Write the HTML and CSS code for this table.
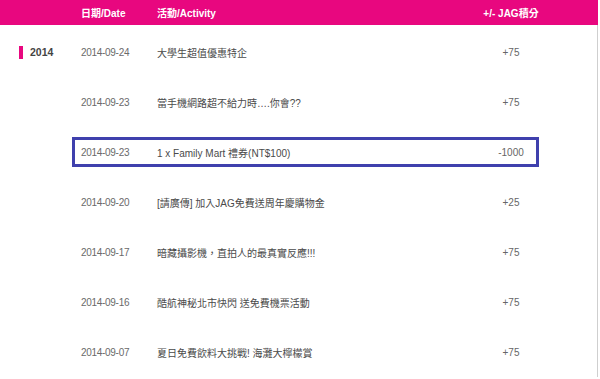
FILE: index.html
```html
<!DOCTYPE html>
<html lang="zh-Hant">
<head>
<meta charset="utf-8">
<title>JAG積分</title>
<link rel="stylesheet" href="styles.css">
</head>
<body>
<div class="page">
  <div class="header">
    <div class="year-cell"></div>
    <div class="cells">
      <div class="date">日期/Date</div>
      <div class="activity">活動/Activity</div>
      <div class="score">+/- JAG積分</div>
    </div>
  </div>
  <div class="list">
    <div class="row">
      <div class="year-cell"><span class="year-bar"></span><span class="year">2014</span></div>
      <div class="cells">
        <div class="date">2014-09-24</div>
        <div class="activity">大學生超值優惠特企</div>
        <div class="score">+75</div>
      </div>
    </div>
    <div class="row">
      <div class="year-cell"></div>
      <div class="cells">
        <div class="date">2014-09-23</div>
        <div class="activity">當手機網路超不給力時….你會??</div>
        <div class="score">+75</div>
      </div>
    </div>
    <div class="row">
      <div class="year-cell"></div>
      <div class="cells highlight">
        <div class="date">2014-09-23</div>
        <div class="activity">1 x Family Mart 禮券(NT$100)</div>
        <div class="score">-1000</div>
      </div>
    </div>
    <div class="row">
      <div class="year-cell"></div>
      <div class="cells">
        <div class="date">2014-09-20</div>
        <div class="activity">[請廣傳] 加入JAG免費送周年慶購物金</div>
        <div class="score">+25</div>
      </div>
    </div>
    <div class="row">
      <div class="year-cell"></div>
      <div class="cells">
        <div class="date">2014-09-17</div>
        <div class="activity">暗藏攝影機，直拍人的最真實反應!!!</div>
        <div class="score">+75</div>
      </div>
    </div>
    <div class="row">
      <div class="year-cell"></div>
      <div class="cells">
        <div class="date">2014-09-16</div>
        <div class="activity">酷航神秘北市快閃 送免費機票活動</div>
        <div class="score">+75</div>
      </div>
    </div>
    <div class="row">
      <div class="year-cell"></div>
      <div class="cells">
        <div class="date">2014-09-07</div>
        <div class="activity">夏日免費飲料大挑戰! 海灘大檸檬賞</div>
        <div class="score">+75</div>
      </div>
    </div>
  </div>
</div>
</body>
</html>
```
FILE: styles.css
```css
html, body {
  margin: 0;
  padding: 0;
  background: #fff;
}
body {
  font-family: "Liberation Sans", Arial, "Noto Sans CJK TC", sans-serif;
  font-size: 10px;
  color: #555;
}
.page {
  width: 598px;
}
.header {
  display: flex;
  align-items: center;
  height: 25px;
  background: #e8077f;
  color: #fff;
  font-weight: bold;
}
.header .cells {
  height: 25px;
}
.list {
  border-right: 1px solid #cfcfcf;
  padding-top: 2px;
  height: 352px;
  box-sizing: border-box;
}
.row {
  display: flex;
  align-items: center;
  height: 50px;
}
.year-cell {
  width: 72px;
  flex: none;
  display: flex;
  align-items: center;
  padding-left: 19px;
  box-sizing: border-box;
}
.year-bar {
  width: 4px;
  height: 13px;
  background: #e8077f;
  margin-right: 7px;
}
.year {
  font-weight: bold;
  font-size: 10.5px;
  color: #444;
}
.cells {
  display: flex;
  align-items: center;
  width: 467px;
  height: 30px;
  box-sizing: border-box;
  border: 3px solid transparent;
  padding-left: 6px;
}
.cells.highlight {
  border-color: #3f40ad;
}
.date {
  width: 76px;
  flex: none;
  white-space: nowrap;
  color: #6a6a6a;
  letter-spacing: -0.3px;
}
.header .date {
  color: #fff;
  letter-spacing: 0;
}
.activity {
  flex: 1;
  white-space: nowrap;
  color: #4a4a4a;
}
.header .activity {
  color: #fff;
}
.score {
  width: 50px;
  flex: none;
  display: flex;
  justify-content: center;
  white-space: nowrap;
  color: #666;
}
.header .score {
  color: #fff;
}
```
